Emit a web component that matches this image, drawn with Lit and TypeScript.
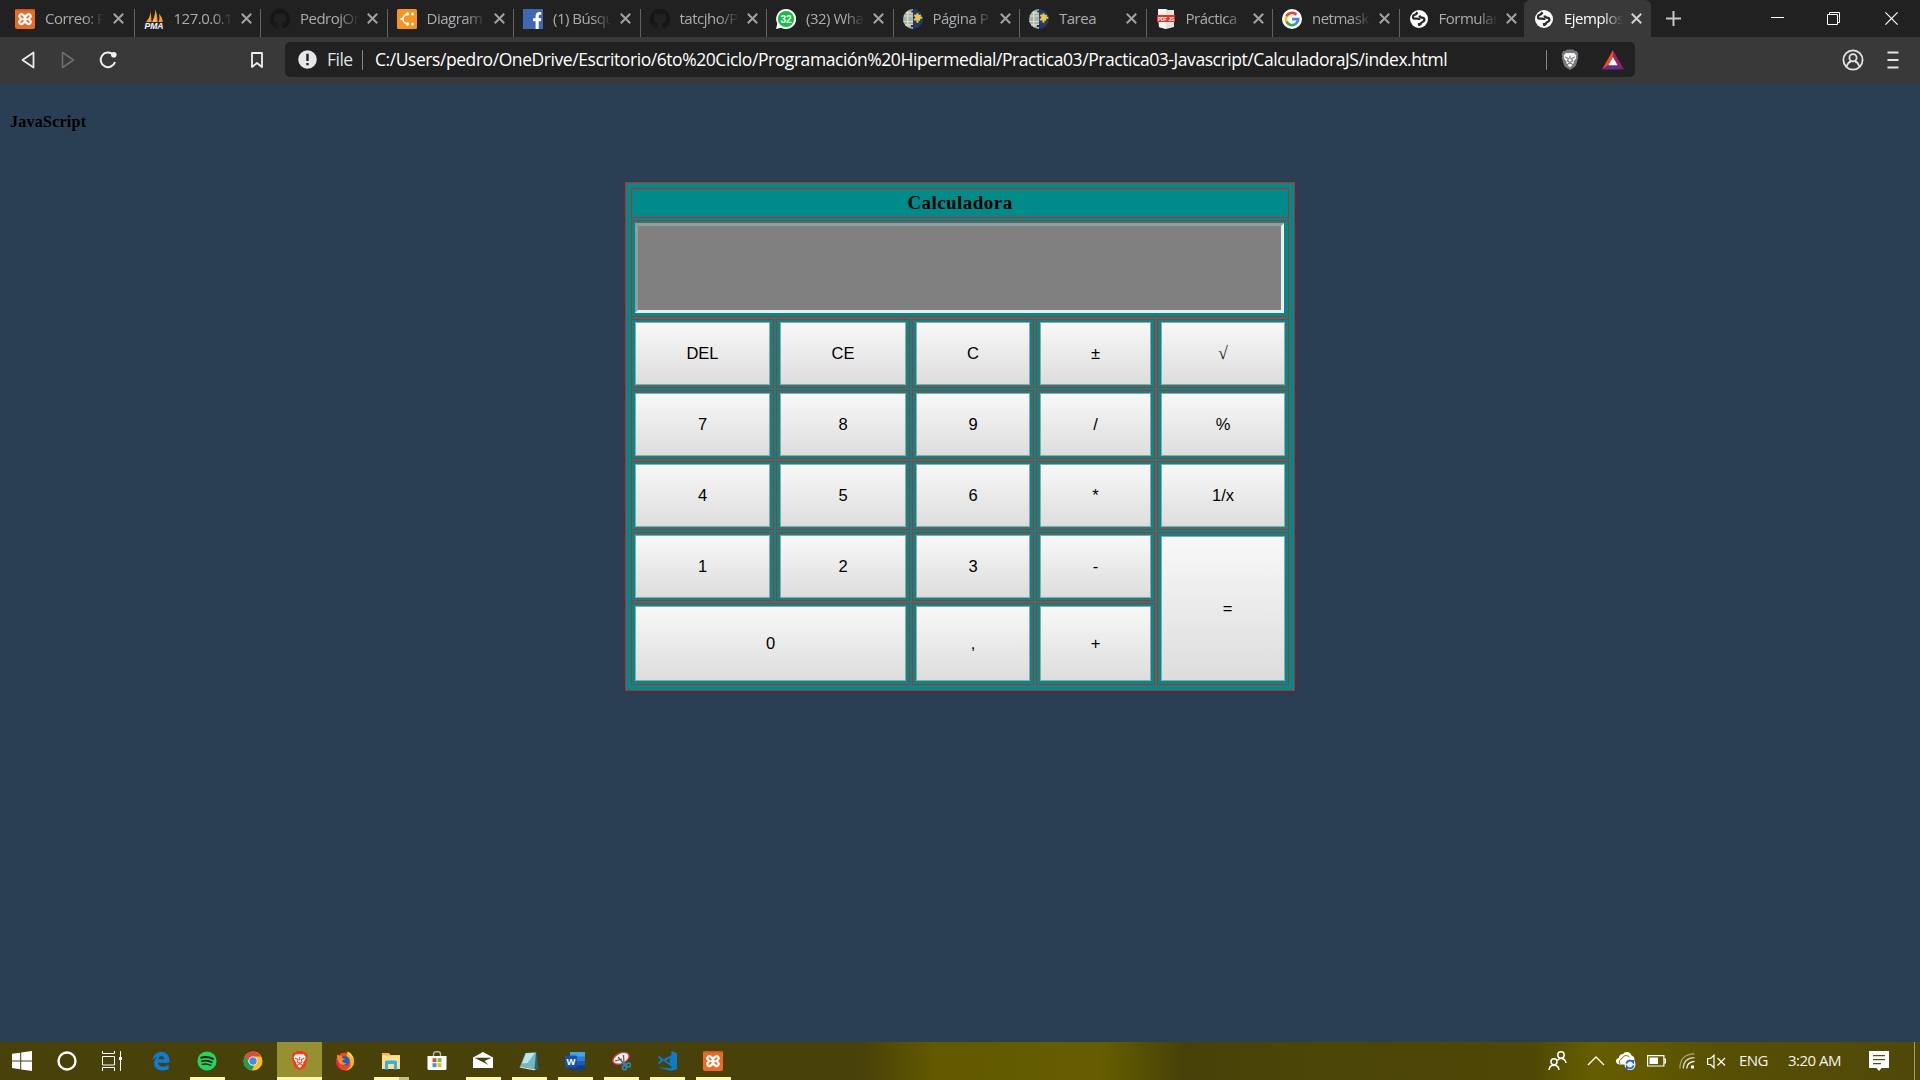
import { LitElement, html, svg, css } from "lit";
import { customElement, property } from "lit/decorators.js";
import { classMap } from "lit/directives/class-map.js";

const githubPath =
  "M8 0C3.58 0 0 3.58 0 8c0 3.54 2.29 6.53 5.47 7.59.4.07.55-.17.55-.38 0-.19-.01-.82-.01-1.49-2.01.37-2.53-.49-2.69-.94-.09-.23-.48-.94-.82-1.13-.28-.15-.68-.52-.01-.53.63-.01 1.08.58 1.23.82.72 1.21 1.87.87 2.33.66.07-.52.28-.87.51-1.07-1.78-.2-3.64-.89-3.64-3.95 0-.87.31-1.59.82-2.15-.08-.2-.36-1.02.08-2.12 0 0 .67-.21 2.2.82.64-.18 1.32-.27 2-.27s1.36.09 2 .27c1.53-1.04 2.2-.82 2.2-.82.44 1.1.16 1.92.08 2.12.51.56.82 1.27.82 2.15 0 3.07-1.87 3.75-3.65 3.95.29.25.54.73.54 1.48 0 1.07-.01 1.93-.01 2.2 0 .21.15.46.55.38A8.01 8.01 0 0016 8c0-4.42-3.58-8-8-8z";

const lionShield = (shield: string, face: string) => svg`
  <path fill=${shield} d="M5.5 1.2 7 0h6l1.500 1.200 2.300.4 1.600 3.200-.6 1.700.5 1.500-2.200 7.500q-.4 1.200-1.500 2L10 20.500l-4.600-3q-1.100-.8-1.500-2L1.700 8l.5-1.500-.6-1.700 1.600-3.200z"/>
  <path fill=${face} d="M6 3.300 8 3.700 10 3.200l2 .5 2-.4 2.400 3-.5 1 .3 1.200-2.700 3.800.4 1.400-2 1 .4 1.200L10 17.800l-2.300-1.900.4-1.200-2-1 .4-1.400-2.700-3.800.3-1.200-.5-1z"/>
  <path fill="none" stroke=${shield} stroke-width="1.100" d="M5.200 7.600 8.300 9l-.7 2.500L10 13l2.400-1.500-.7-2.500 3.100-1.400M10 6.200v3.600M7.700 14.400l2.300-1 2.300 1"/>`;

const globe = svg`
  <circle cx="10" cy="10" r="9" fill="#fff"/>
  <path fill="none" stroke="#2b2b2b" stroke-width="2.300" stroke-linejoin="round" d="M8.500 3.200 7 5.200 4.300 6.600q-.8 2.200.5 2.900l3.700.2q1.800.1 1.800 1.300M10.500 6.500q.3 2 2.300 2.200 3 .3 2.600 2.300-.4 2-2.900 2.600-.7 1.800-2.300 2.400L9.800 14"/>`;

const moodle = svg`
  <path fill="#9fb0bd" d="M10 0a10 10 0 0 0 0 20z"/>
  <path fill="#1f3a6b" d="M10 0a10 10 0 0 1 0 20z"/>
  <path fill="none" stroke="#e9e0a8" stroke-width="1.200" d="M.8 7H10M.3 12.500H10M4.800 2v16M2 15.800h8M3 3.800h7"/>
  <path fill="#f0c63c" d="M11.500 5.500h2V4.200h2v1.500h2.600l-.4 2h1.600v2h-2l-.3 2h-1.600v2.200l-2-.5v-2h-2.700v-2h1.400v-2h-1.500z"/>
  <path fill="#27303a" d="M8.500 1.500h2v2h-2zM8 16h2.500v2H8z"/>`;

const xampp = svg`
  <rect width="20" height="20" rx="2" fill="#ee6a23"/>
  <rect width="20" height="1.600" rx=".8" fill="#c9581c"/>
  <g fill="none" stroke-linecap="round">
    <path stroke="#fff" stroke-width="6.200" d="m6.400 7.200 7.200 5.800M13.600 7.200 6.400 13"/>
    <path stroke="#ee6a23" stroke-width="1.800" d="m6.300 7.200 1.500 1.400M13.700 7.200l-1.500 1.400M6.300 13l1.500-1.400M13.700 13l-1.500-1.400"/>
  </g>`;

const icons: Record<string, unknown> = {
  xampp,
  pma: svg`
    <path fill="#f89c1c" d="M2 13Q6.500 8 6.700 2l.9 11zM8 13Q11.500 7 11.300 0q2.200 6 2.400 13zM14.500 13q1.500-3 .6-8 3.600 3.500 3.600 8z"/>
    <path fill="#fbc04a" d="M8.700 13q2.300-5 2.600-9l.4 9z"/>
    <text x="10" y="19.600" font-family="Liberation Sans" font-size="8.500" font-weight="bold" font-style="italic" text-anchor="middle" textLength="19" lengthAdjust="spacingAndGlyphs" fill="#f1f1f6" stroke="#34345c" stroke-width="1.200" paint-order="stroke">PMA</text>`,
  github: svg`<g transform="scale(1.250)"><path fill="#161616" d=${githubPath}/></g>`,
  diagrams: svg`
    <rect width="20" height="20" rx="1.500" fill="#f7941e"/>
    <path stroke="#fff" stroke-width="1.400" fill="none" d="M10.500 5Q7 5.500 5.500 10q1.500 4.500 5 5"/>
    <path fill="#fff" d="M2.500 10l4.500-2.200v4.400z"/>
    <circle cx="10.500" cy="5" r="1.700" fill="#fff"/><circle cx="15.500" cy="5" r="1.500" fill="#fff"/>
    <circle cx="10.500" cy="15" r="1.700" fill="#fff"/><circle cx="15.500" cy="15" r="1.500" fill="#fff"/>`,
  facebook: svg`
    <rect width="20" height="20" fill="#4267b2"/>
    <path fill="#fff" d="M12.600 20v-7.700H10V9.200h2.600V7c0-2.600 1.600-4 3.900-4 .6 0 1.200 0 1.700.1v2.700h-1c-1.300 0-1.500.6-1.500 1.500v1.900h2.600l-.4 3.100h-2.200V20z"/>`,
  whatsapp: svg`
    <path fill="#fff" d="M10 0a10 10 0 1 1-4.800 18.700L0 20l1.300-5.200A10 10 0 0 1 10 0z"/>
    <circle cx="10" cy="10" r="8.100" fill="#12c143"/>
    <text x="10" y="13.600" font-family="Liberation Sans" font-size="10" font-weight="bold" text-anchor="middle" fill="#fff">32</text>`,
  moodle,
  pdf: svg`
    <path fill="#e3e3e3" d="M2 0h8l2 1h6v17l-8 2-7-2z"/><path fill="#f5f5f5" d="M2 0h8v20l-7-2z"/>
    <rect x="1" y="6" width="18" height="7" fill="#e8321f"/>
    <text x="10" y="12" font-family="Liberation Sans" font-size="6" font-weight="bold" text-anchor="middle" textLength="16" lengthAdjust="spacingAndGlyphs" fill="#fff">PDF JS</text>`,
  google: svg`
    <circle cx="10" cy="10" r="10" fill="#fff"/>
    <g fill="none" stroke-width="2.700">
      <path stroke="#ea4335" d="M4.500 7.400A6.100 6.100 0 0 1 14.400 5.800"/>
      <path stroke="#fbbc05" d="M4.600 12.900A6.100 6.100 0 0 1 4.600 7.200"/>
      <path stroke="#34a853" d="M14 14.600A6.100 6.100 0 0 1 4.500 12.700"/>
      <path stroke="#4285f4" d="M10 10.100h6.200q0 2.900-2.300 4.600"/>
    </g>`,
  globe,
  windows: svg`<path fill="#fff" d="M0 2.800 8.200 1.700v7.700H0zM9.200 1.500 20 0v9.400H9.200zM0 10.400h8.200v7.800L0 17zM9.200 10.400H20V20L9.200 18.400z"/>`,
  cortana: svg`<circle cx="10" cy="10" r="8.500" fill="none" stroke="#fff" stroke-width="2.400"/>`,
  taskview: svg`
    <path fill="none" stroke="#fff" stroke-width="1" d="M.5 0v2.500h12V0M.5 20v-3.500h12V20M.5 5.500h12v8.500H.5zM18.500 0v20"/>
    <rect x="17" y="6" width="3" height="3" fill="#fff"/>`,
  edge: svg`<path fill="#0b7cd8" d="M1.500 9.300C2 4.500 5.500.8 10.400.8c5.200 0 8 3.900 8 8.500v2.400H7.200c.2 2.600 2.400 3.900 5.200 3.900 1.900 0 3.800-.6 5.300-1.500v4c-1.800 1-3.800 1.400-6.300 1.400-5 0-8.300-2.800-8.300-7.500 0-2.600 1.200-4.800 3.300-6.300-2.300.6-3.900 2-4.900 3.600zM7.400 8.200h5.900c0-2-1-3.300-2.800-3.300-1.600 0-2.800 1.300-3.100 3.300z"/>`,
  spotify: svg`
    <circle cx="10" cy="10" r="9.600" fill="#1ed760"/>
    <path fill="none" stroke="#191919" stroke-linecap="round" d="M4.200 6.700q6.300-1.700 11.800 1.200" stroke-width="2"/>
    <path fill="none" stroke="#191919" stroke-linecap="round" d="M4.700 10.200q5.600-1.500 10.200 1.100" stroke-width="1.600"/>
    <path fill="none" stroke="#191919" stroke-linecap="round" d="M5.200 13.400q4.700-1.200 8.700 1" stroke-width="1.300"/>`,
  chrome: svg`
    <circle cx="10" cy="10" r="9.500" fill="#fbc116"/>
    <path fill="#dd4b3e" d="M1.800 5.200A9.500 9.500 0 0 1 18.200 5.400H10a4.600 4.600 0 0 0-4 6.900z"/>
    <path fill="#1b9e59" d="M1.800 5.200 6 12.300a4.600 4.600 0 0 0 5.300 2.100L8.800 19.400A9.500 9.500 0 0 1 1.800 5.200z"/>
    <circle cx="10" cy="10" r="4.600" fill="#f3f6fa"/><circle cx="10" cy="10" r="3.700" fill="#4688f1"/>`,
  brave: svg`<g transform="translate(.2 0) scale(.95)">${lionShield("#fb3a1c", "#fff")}</g>`,
  firefox: svg`
    <circle cx="10" cy="10.500" r="9" fill="#f4431f"/>
    <path fill="#fdb51a" d="M12.500.5c4 2 6.600 5.500 6.600 9.800a9 9 0 0 1-9 9.200q6.500-2.600 5.200-8.200-.8-4.300-3.800-6.400z"/>
    <path fill="#e21a6c" d="M1.500 7.500Q0 16 7 19q-4-4-3.400-8z"/>
    <circle cx="9.800" cy="9.800" r="4.800" fill="#205ecf"/>
    <path fill="#fd8d1b" d="M2 3.500 4.500 5l2.800-.5-.6 2.400 3.300 1.200-3 1.500q1 3 4.500 2.700Q9 15 5.600 13 2 10.600 2 3.500z"/>
    <path fill="#ffe14a" d="M12.500.5q5.500 3 5.900 7.500l-3-2.500z"/>`,
  explorer: svg`
    <path fill="#f5bd3f" d="M1 2h7l1.500 2H19v3H1z"/><path fill="#fee08c" d="M1 4.500h18V18H1z"/>
    <path fill="#36b1ec" d="M4 18.500V11q0-1.500 1.500-1.500h9q1.500 0 1.500 1.500v7.500h-3V13H7v5.500z"/>`,
  store: svg`
    <path fill="none" stroke="#b9b49b" stroke-width="1.400" d="M6.500 5V3.200Q6.500.8 9 .8h2q2.500 0 2.500 2.400V5"/>
    <path fill="#fff" d="M.5 5h19v12.500q0 1.500-1.500 1.500H2Q.5 19 .5 17.500z"/>
    <path fill="#e74a25" d="M5.500 7.200h4v4h-4z"/><path fill="#7db93b" d="M10.500 7.200h4v4h-4z"/>
    <path fill="#2f9fd8" d="M5.500 12.200h4v4h-4z"/><path fill="#f5b81c" d="M10.500 12.200h4v4h-4z"/>`,
  mail: svg`<path fill="#fff" d="M0 6.500 10 1l10 5.500V17H0z"/><path fill="#453f0a" d="M1.500 6.800h17L11.500 10l4 4z"/>`,
  notepad: svg`
    <path fill="#2f626c" d="M6.500 2 17.500 1l2 17-3 1z"/>
    <path fill="#70b8c4" d="M6.500 2 17 1.500 15.500 18 1 15.500z"/>
    <path fill="#bfe5ea" d="M7 2.200 16 1.700 8.500 12 3 12.500z"/>
    <path fill="#d8dfdf" d="m1 15.500 14.500 2.500 2 .5-3 .8L.5 16.500z"/>`,
  word: svg`
    <path fill="#41a5ee" d="M5 1h15v5H5z"/><path fill="#2b7cd3" d="M5 5.500h15V10H5z"/>
    <path fill="#185abd" d="M5 10h15v4.500H5z"/><path fill="#103f91" d="M5 14.500h15V19H5z"/>
    <rect x="0" y="4.500" width="12" height="12" rx="1" fill="#1752ae"/>
    <text x="6" y="14" font-family="Liberation Sans" font-size="9.500" font-weight="bold" text-anchor="middle" fill="#fff">W</text>`,
  snip: svg`
    <ellipse cx="9.500" cy="8" rx="9" ry="5.800" transform="rotate(-25 9.500 8)" fill="#8f2525"/>
    <ellipse cx="10" cy="7.300" rx="8.600" ry="5.200" transform="rotate(-25 10 7.300)" fill="#f2f2f2" stroke="#d33a3a" stroke-width="1.300"/>
    <path stroke="#555" stroke-width="1.200" d="m7 6 7 8M12.500 4l.5 9M4 10l7-2"/>
    <g fill="none" stroke="#258cc4" stroke-width="1.600"><circle cx="13.500" cy="16.800" r="2"/><circle cx="17.500" cy="14" r="2"/><path d="m12 11.500 1.500 3.300M12 12l3.500 1.500"/></g>`,
  vscode: svg`<path fill="#0b7ccb" d="M14.500 0 20 2v16l-5.500 2L0 16.300l14.500 1zM14.500 4v11.500L6.300 9.800 2.500 13 .8 12l3-3-3-3 1.700-1 3.800 3.200zm-1.800 3.300L9 9.600l3.700 2.500z"/>`,
};

const icon = (name: string) => html`<svg class="icon" width="20" height="20" viewBox="0 0 20 20">${icons[name]}</svg>`;

@customElement("browser-tab")
class BrowserTab extends LitElement {
  @property() icon = "";
  @property() label = "";
  @property({ type: Boolean, reflect: true }) active = false;
  @property({ type: Boolean, reflect: true }) first = false;

  static styles = css`
    :host {
      display: flex;
      align-items: center;
      box-sizing: border-box;
      flex: none;
      width: 126.5px;
      height: 37px;
      color: #a9adb0;
      font: 15px "Open Sans", sans-serif;
    }
    .separator { width: 1px; height: 28px; align-self: flex-end; background: #636363; }
    .icon { flex: none; margin: 1px 10px 0 9px; }
    .label {
      flex: none;
      width: 59px;
      overflow: hidden;
      white-space: nowrap;
      letter-spacing: -0.5px;
      line-height: 24px;
      padding-bottom: 2px;
      mask-image: linear-gradient(90deg, #000 66%, transparent 100%);
    }
    .close { flex: none; margin: 0 0 0 8px; stroke: #a0a3a5; }
    :host([first]) .separator, :host([active]) .separator { background: transparent; }
    :host([first]) .icon { margin-left: 7px; }
    :host([first]) .close { margin-left: 9px; }
    :host([active]) { width: 127px; margin-left: -1px; color: #fff; background: #393939; border-radius: 6px 6px 0 0; }
    :host([active]) .close { stroke: #cfd1d3; }
    .short { mask-image: none; }
  `;

  render() {
    return html`
      <span class="separator"></span>
      ${icon(this.icon)}
      <span class=${classMap({ label: true, short: this.label.length < 6 })}>${this.label}</span>
      <svg class="close" width="11" height="11" viewBox="0 0 11 11" stroke-width="2"><path d="M.8.800l9.400 9.400M10.200.8.800 10.200" /></svg>
    `;
  }
}

@customElement("browser-toolbar")
class BrowserToolbar extends LitElement {
  static styles = css`
    :host {
      display: flex;
      align-items: center;
      height: 47px;
      box-sizing: border-box;
      padding: 0 21px 2px 21px;
      background: #393939;
      font: 17.5px "Open Sans", sans-serif;
      color: #fff;
    }
    svg { flex: none; display: block; }
    .forward { margin-left: 26px; }
    .reload { margin-left: 24px; }
    .bookmark { margin-left: 132px; }
    .address {
      display: flex;
      align-items: center;
      box-sizing: border-box;
      width: 1350px;
      height: 35px;
      margin-left: 21px;
      padding: 0 11px 0 13px;
      border-radius: 5px;
      background: #212121;
    }
    .scheme { width: 26px; margin-left: 10px; padding-bottom: 1px; color: #dfe1e5; white-space: nowrap; letter-spacing: -0.5px; }
    .rule { flex: none; width: 1px; height: 20px; margin: 0 12px 0 9px; background: #85888b; }
    .url { flex: 1; padding-bottom: 1px; white-space: nowrap; letter-spacing: -0.435px; }
    .shield { margin-left: 1px; }
    .rewards { margin-left: 22px; }
    .profile { margin-left: auto; }
    .menu { margin-left: 23px; }
  `;

  render() {
    return html`
      <svg width="14" height="18" viewBox="0 0 14 18" fill="none" stroke="#e8eaed" stroke-width="1.800" stroke-linejoin="round"><path d="M12.500 1.500v15L1.500 9z" /></svg>
      <svg class="forward" width="14" height="18" viewBox="0 0 14 18" fill="none" stroke="#6d6d6d" stroke-width="1.600" stroke-linejoin="round"><path d="M1.500 1.500v15L12.500 9z" /></svg>
      <svg class="reload" width="19" height="18" viewBox="0 0 19 18" fill="none" stroke="#eef0f2" stroke-width="2"><path d="M14 3.500A7.300 7.300 0 1 0 16 11" /><circle cx="14.800" cy="3.800" r="2.800" fill="#eef0f2" stroke="none" /></svg>
      <svg class="bookmark" width="14" height="18" viewBox="0 0 14 18" fill="none" stroke="#f0f0f0" stroke-width="1.800" stroke-linejoin="round"><path d="M2 2h10v14l-5-4-5 4z" /></svg>
      <div class="address">
        <svg width="19" height="19" viewBox="0 0 19 19"><circle cx="9.500" cy="9.500" r="9.300" fill="#e4e6ea" /><path fill="#202124" d="M8.300 3.700h2.400v7.300H8.300zM8.300 13h2.400v2.300H8.300z" /></svg>
        <span class="scheme">File</span>
        <span class="rule"></span>
        <span class="url">C:/Users/pedro/OneDrive/Escritorio/6to%20Ciclo/Programación%20Hipermedial/Practica03/Practica03-Javascript/CalculadoraJS/index.html</span>
        <span class="rule"></span>
        <svg class="shield" width="20" height="22" viewBox="0 0 20 21">${lionShield("#77797c", "#f4f4f4")}</svg>
        <svg class="rewards" width="22" height="20" viewBox="0 0 22 20"><path fill="#ff4724" d="M11 0v7L6.500 15 0 19.500z" /><path fill="#9e1f63" d="M11 0v7l4.500 8 6.500 4.500z" /><path fill="#662d91" d="M0 19.500 6.500 15h9l6.500 4.500z" /><path fill="#fff" d="m11 7 4.600 8.200H6.400z" /></svg>
      </div>
      <svg class="profile" width="22" height="22" viewBox="0 0 22 22" fill="none" stroke="#e4e4e4" stroke-width="1.800"><circle cx="11" cy="11" r="9.600" /><circle cx="11" cy="8.700" r="3.600" /><path d="M4.800 17.500Q6 13 9 12.500M17.200 17.500Q16 13 13 12.500" /></svg>
      <svg class="menu" width="12" height="18" viewBox="0 0 12 18" stroke="#e4e4e4" stroke-width="1.800"><path d="M.5 1.500h11M.5 9h11M.5 16.500h11" /></svg>
    `;
  }
}

@customElement("js-calculator")
class JsCalculator extends LitElement {
  static styles = css`
    :host {
      display: grid;
      box-sizing: border-box;
      width: 670px;
      height: 509px;
      padding: 5px;
      border: 1px solid #dc1e1e;
      background: #008b8b;
      gap: 2px;
      grid-template-columns: 143px 134px 122px 119px 132px;
      grid-template-rows: 30px 97px 69px 69px 69px 69px 82px;
    }
    .cell { display: flex; box-sizing: border-box; border: 1px solid #dc1e1e; padding: 2px 3px; }
    .title {
      grid-column: 1 / -1;
      align-items: center;
      justify-content: center;
      color: #000;
      font: bold 19px "Liberation Serif", serif;
      letter-spacing: 0.45px;
      padding-bottom: 3px;
    }
    .screen { grid-column: 1 / -1; padding-bottom: 3px; }
    .display { width: 649px; box-sizing: border-box; border: 3px solid; border-color: #9a9a9a #eee #eee #9a9a9a; background: #808080; }
    .zero { grid-column: span 2; }
    .bottom { padding-bottom: 3px; }
    .equals { grid-row: 6 / 8; grid-column: 5; padding: 3px; }
    button {
      flex: 1;
      min-width: 0;
      padding: 0;
      border: 1px solid #a0a0a0;
      border-radius: 0;
      background: linear-gradient(#f8f8f8, #ddd);
      color: #000;
      font: 16.500px "Liberation Sans", Arial, sans-serif;
    }
    .equals button { padding-left: 9px; }
    .root button { font: 18px "Liberation Serif", serif; color: #222; }
  `;

  render() {
    const keys = ["DEL", "CE", "C", "±", "√", "7", "8", "9", "/", "%", "4", "5", "6", "*", "1/x", "1", "2", "3", "-", "=", "0", ",", "+"];
    return html`
      <div class="cell title">Calculadora</div>
      <div class="cell screen"><div class="display"></div></div>
      ${keys.map(
        (key, i) =>
          html`<div class=${classMap({ cell: true, equals: key === "=", zero: key === "0", root: key === "√", bottom: i > 19 })}><button>${key}</button></div>`
      )}
    `;
  }
}

const apps: [string, string][] = [
  ["edge", ""],
  ["spotify", "open"],
  ["chrome", ""],
  ["brave", "current"],
  ["firefox", ""],
  ["explorer", "stacked"],
  ["store", ""],
  ["mail", "open"],
  ["notepad", "open"],
  ["word", "open"],
  ["snip", "open"],
  ["vscode", "open"],
  ["xampp", "open"],
];

@customElement("task-bar")
class TaskBar extends LitElement {
  static styles = css`
    :host {
      display: flex;
      height: 38px;
      color: #f4f4ea;
      font: 15px "Open Sans", sans-serif;
      background: linear-gradient(90deg, #484109 0, #484109 860px, #625900 935px, #665e00 1100px, #464108 1185px, #4c4607 1320px, #4e4706 1530px, #655d00 1590px, #645b00 1630px, #574f04 1720px, #50480a 1920px);
    }
    .tile { display: grid; grid-template-rows: 1fr 3px; justify-items: center; align-items: center; width: 46px; }
    .tile .icon { margin-top: 3px; }
    .system { width: 45px; }
    .system .icon { margin-right: 1px; }
    .apps { display: flex; margin-left: 3px; }
    .mark { width: 35px; height: 3px; }
    .open .mark { background: #fff9ae; }
    .stacked .mark { background: linear-gradient(90deg, #fff9ae 25px, #c5be85 25px); }
    .current { width: 45px; margin-left: 1px; background: #979030; }
    .current .mark { width: 45px; background: #fff9ae; }
    .tray { display: flex; align-items: center; margin-left: auto; }
    .tray svg { display: block; flex: none; }
    .lang { width: 30px; margin: 0 0 2px 13px; letter-spacing: -0.6px; }
    .clock { width: 54px; margin: 0 0 2px 19px; white-space: nowrap; letter-spacing: -0.5px; }
    .edge { width: 1px; height: 38px; margin: 0 5px 0 25px; background: #a39c6c; }
    .chevron { margin-left: 20px; }
    .cloud { margin-left: 11px; }
    .battery { margin-left: 11px; }
    .wifi { margin-left: 13px; }
    .volume { margin-left: 12px; }
    .notes { margin-left: 27px; }
  `;

  render() {
    return html`
      ${["windows", "cortana", "taskview"].map((name) => html`<div class="tile system">${icon(name)}</div>`)}
      <div class="apps">
        ${apps.map(([name, state]) => html`<div class="tile ${state}">${icon(name)}<span class="mark"></span></div>`)}
      </div>
      <div class="tray">
        <svg width="19" height="20" viewBox="0 0 19 20" fill="none" stroke="#fff" stroke-width="1.500"><circle cx="6" cy="10.800" r="3" /><path d="M1 19q.5-4.800 5-4.800t5 4.800" /><circle cx="13" cy="4" r="3.200" /><path d="M9.500 9.200q1.500-1.700 3.500-1.700 4.300 0 5 4.500" /></svg>
        <svg class="chevron" width="18" height="10" viewBox="0 0 18 10" fill="none" stroke="#fff" stroke-width="1.300"><path d="m1 9 8-8 8 8" /></svg>
        <svg class="cloud" width="20" height="18" viewBox="0 0 20 18"><path fill="#fff" d="M3.500 12.500Q0 12 0 9q0-2.500 2.800-3Q3.500 2 7 2q1-2 4-2 3.500 0 4.500 3.500Q18.500 4 18.500 8v4.500z" /><path stroke="#5a5200" fill="none" stroke-width=".8" d="M4 12Q2 8 6 6.500q1-3 4-3 2 0 3.500 1.500" /><circle cx="14" cy="12.500" r="5.500" fill="#e9f1fb" /><path fill="none" stroke="#1d62c9" stroke-width="1.700" d="M10.300 11.500q1.200-2.800 3.700-2.800 2 0 3.200 1.500V8M17.700 13.500q-1.200 2.800-3.700 2.800-2 0-3.200-1.500v2.400" /></svg>
        <svg class="battery" width="19" height="12" viewBox="0 0 19 12"><path fill="none" stroke="#fff" stroke-width="1.200" d="M.6.600h16.300v10.400H.6zM17 4h1.400v4H17" /><path fill="#fff" d="M2.500 2.500h8.500v6.500H2.500z" /></svg>
        <svg class="wifi" width="16" height="16" viewBox="0 0 16 16" fill="none" stroke-width="1.200"><path stroke="#a9a575" d="M.8 15.500Q1 1 15.500.8" /><path stroke="#d8d6c0" d="M4.200 15.500Q4.500 5 15.500 4.600" /><path stroke="#fff" d="M7.700 15.500Q8 9 15.500 8.300" /><path fill="#fff" stroke="none" d="M12 12.500h3v3h-3z" /></svg>
        <svg class="volume" width="19" height="15" viewBox="0 0 19 15" fill="none" stroke="#fff" stroke-width="1.200"><path d="M.6 4.500h3L7 1.200v12.600l-3.400-3.300h-3zM10.500 4l7.500 7.500M18 4l-7.500 7.500" /></svg>
        <span class="lang">ENG</span>
        <span class="clock">3:20 AM</span>
        <svg class="notes" width="20" height="20" viewBox="0 0 20 20"><path fill="#fff" d="M0 0h20v17h-7.500L10 20l-2.500-3H0z" /><path stroke="#5a5204" stroke-width="1.300" d="M4 4.600h12M4 8.600h12M4 12.600h8" /></svg>
        <span class="edge"></span>
      </div>
    `;
  }
}

const tabs: [string, string][] = [
  ["xampp", "Correo: P"],
  ["pma", "127.0.0.1"],
  ["github", "PedrojOr"],
  ["diagrams", "Diagram"],
  ["facebook", "(1) Búsqu"],
  ["github", "tatcjho/P"],
  ["whatsapp", "(32) Wha"],
  ["moodle", "Página P"],
  ["moodle", "Tarea"],
  ["pdf", "Práctica"],
  ["google", "netmask"],
  ["globe", "Formular"],
  ["globe", "Ejemplos"],
];

@customElement("app-root")
class AppRoot extends LitElement {
  static styles = css`
    :host { display: flex; flex-direction: column; width: 1920px; height: 1080px; overflow: hidden; background: #2b3f54; }
    .tabs { display: flex; align-items: center; height: 37px; flex: none; box-sizing: border-box; padding: 0 22px 0 7px; background: #212121; }
    .plus { margin-left: 15px; }
    .controls { display: flex; align-items: center; margin-left: auto; }
    .restore { margin: 0 45px 0 43px; }
    .page { flex: 1; padding: 27px 10px 0; }
    .heading { margin: 0 0 50px; color: #000; font: bold 16px/21px "Liberation Serif", serif; letter-spacing: 0.25px; }
    .calculator { margin: 0 auto; }
  `;

  render() {
    return html`
      <div class="tabs">
        ${tabs.map(
          ([name, label], i) => html`<browser-tab .icon=${name} .label=${label} ?first=${i === 0} ?active=${i === tabs.length - 1}></browser-tab>`
        )}
        <svg class="plus" width="15" height="15" viewBox="0 0 15 15" stroke="#c6c8ca" stroke-width="2"><path d="M7.500 0v15M0 7.500h15" /></svg>
        <div class="controls">
          <svg width="13" height="13" viewBox="0 0 13 13" stroke="#fff"><path d="M0 5.500h13" /></svg>
          <svg class="restore" width="13" height="13" viewBox="0 0 13 13" fill="none" stroke="#fff"><path d="M.5 2.500h10v10H.5zM2.500 2.500v-2h10v10h-2" /></svg>
          <svg width="13" height="13" viewBox="0 0 13 13" stroke="#fff" stroke-width="1.200"><path d="m.4.400 12.200 12.200M12.600.4.400 12.600" /></svg>
        </div>
      </div>
      <browser-toolbar></browser-toolbar>
      <div class="page">
        <h4 class="heading">JavaScript</h4>
        <js-calculator class="calculator"></js-calculator>
      </div>
      <task-bar></task-bar>
    `;
  }
}
